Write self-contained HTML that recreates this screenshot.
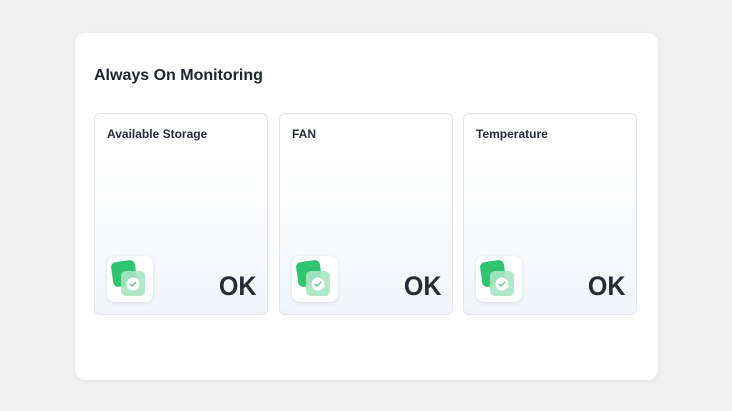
<!DOCTYPE html>
<html><head><style>
*{margin:0;padding:0;box-sizing:border-box}
body{width:732px;height:411px;background:#f0f0f0;font-family:"Liberation Sans",sans-serif;position:relative;overflow:hidden}
.main{position:absolute;left:75px;top:33px;width:583px;height:347px;background:#fff;border-radius:10px;box-shadow:0 1px 4px rgba(0,0,0,.06)}
h1{position:absolute;left:94px;top:67px;font-size:16px;font-weight:bold;color:#1e2330}
.c{position:absolute;top:113px;width:174px;height:202px;border:1px solid #e1e4e9;border-radius:6px;background:linear-gradient(#fff 20%,#f1f5fb)}
.t{position:absolute;left:12px;top:13px;font-size:12px;font-weight:bold;color:#262b38}
.ok{position:absolute;right:11px;top:157px;font-size:27px;font-weight:bold;color:#262b38;transform:scaleX(.93);transform-origin:right}
.ic{position:absolute;left:12px;top:142px;width:46px;height:46px;background:#fff;border-radius:8px;box-shadow:0 1px 4px rgba(0,0,0,.1)}
</style></head><body>
<div class="main"></div>
<h1>Always On Monitoring</h1>
<div class="c" style="left:94px"><div class="t">Available Storage</div><div class="ic"><svg width="46" height="46"><rect x="5" y="5" width="24" height="25" rx="5" fill="#2fc470" transform="rotate(-8 17 17)"/><rect x="14" y="15" width="24" height="25" rx="5" fill="#a8e6c2" opacity=".9"/><circle cx="26" cy="28" r="6.5" fill="#fff"/><path d="M23 28l2 2 4-4" stroke="#5ccf8e" stroke-width="1.5" fill="none"/></svg></div><div class="ok">OK</div></div>
<div class="c" style="left:279px"><div class="t">FAN</div><div class="ic"><svg width="46" height="46"><rect x="5" y="5" width="24" height="25" rx="5" fill="#2fc470" transform="rotate(-8 17 17)"/><rect x="14" y="15" width="24" height="25" rx="5" fill="#a8e6c2" opacity=".9"/><circle cx="26" cy="28" r="6.5" fill="#fff"/><path d="M23 28l2 2 4-4" stroke="#5ccf8e" stroke-width="1.5" fill="none"/></svg></div><div class="ok">OK</div></div>
<div class="c" style="left:463px"><div class="t">Temperature</div><div class="ic"><svg width="46" height="46"><rect x="5" y="5" width="24" height="25" rx="5" fill="#2fc470" transform="rotate(-8 17 17)"/><rect x="14" y="15" width="24" height="25" rx="5" fill="#a8e6c2" opacity=".9"/><circle cx="26" cy="28" r="6.5" fill="#fff"/><path d="M23 28l2 2 4-4" stroke="#5ccf8e" stroke-width="1.5" fill="none"/></svg></div><div class="ok">OK</div></div>
</body></html>
